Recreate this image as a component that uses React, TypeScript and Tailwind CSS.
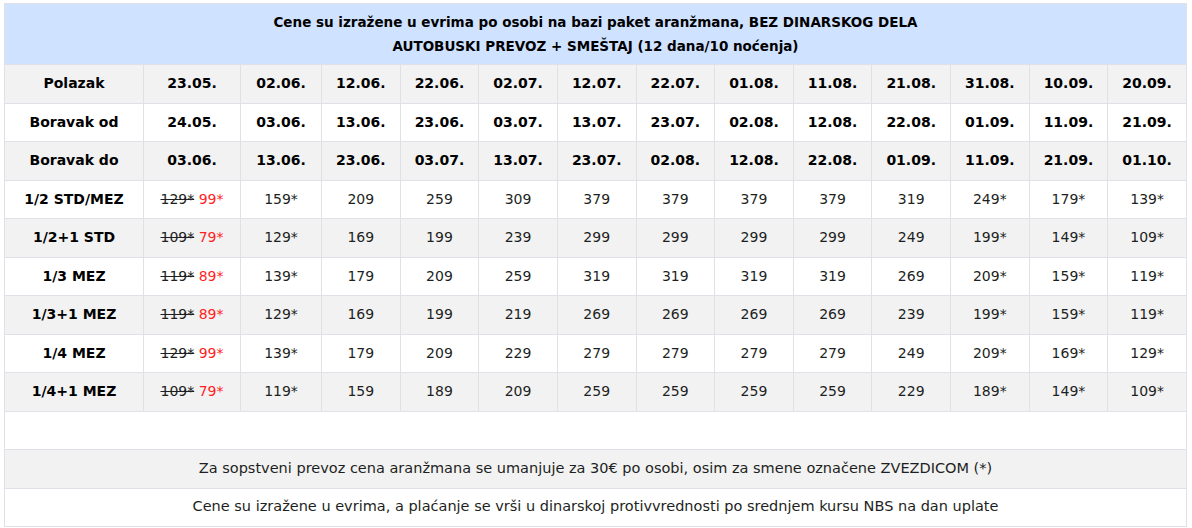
const dates = {
  polazak: ['23.05.', '02.06.', '12.06.', '22.06.', '02.07.', '12.07.', '22.07.', '01.08.', '11.08.', '21.08.', '31.08.', '10.09.', '20.09.'],
  od: ['24.05.', '03.06.', '13.06.', '23.06.', '03.07.', '13.07.', '23.07.', '02.08.', '12.08.', '22.08.', '01.09.', '11.09.', '21.09.'],
  do: ['03.06.', '13.06.', '23.06.', '03.07.', '13.07.', '23.07.', '02.08.', '12.08.', '22.08.', '01.09.', '11.09.', '21.09.', '01.10.'],
};

// first cell: [old, new], rest plain strings
const prices: { label: string; first: [string, string]; rest: string[] }[] = [
  { label: '1/2 STD/MEZ', first: ['129*', '99*'], rest: ['159*', '209', '259', '309', '379', '379', '379', '379', '319', '249*', '179*', '139*'] },
  { label: '1/2+1 STD', first: ['109*', '79*'], rest: ['129*', '169', '199', '239', '299', '299', '299', '299', '249', '199*', '149*', '109*'] },
  { label: '1/3 MEZ', first: ['119*', '89*'], rest: ['139*', '179', '209', '259', '319', '319', '319', '319', '269', '209*', '159*', '119*'] },
  { label: '1/3+1 MEZ', first: ['119*', '89*'], rest: ['129*', '169', '199', '219', '269', '269', '269', '269', '239', '199*', '159*', '119*'] },
  { label: '1/4 MEZ', first: ['129*', '99*'], rest: ['139*', '179', '209', '229', '279', '279', '279', '279', '249', '209*', '169*', '129*'] },
  { label: '1/4+1 MEZ', first: ['109*', '79*'], rest: ['119*', '159', '189', '209', '259', '259', '259', '259', '229', '189*', '149*', '109*'] },
];

const cell = 'border border-[#dee2e6] text-center align-middle px-1';

export default function App() {
  return (
    <div className="bg-white w-[1192px] h-[528px] pt-[3px] pl-[4px] font-['DejaVu_Sans',sans-serif] text-[14px] text-[#1d1f22]">
      <table className="table-fixed border-collapse w-[1183px]">
        <colgroup>
          <col className="w-[139px]" />
          <col className="w-[97px]" />
          <col className="w-[81px]" />
        </colgroup>
        <tbody>
          <tr className="bg-[#cfe2ff] h-[61px]">
            <td colSpan={14} className={`${cell} font-bold text-black text-[13.5px] leading-6`}>
              Cene su izražene u evrima po osobi na bazi paket aranžmana, BEZ DINARSKOG DELA
              <br />
              AUTOBUSKI PREVOZ + SMEŠTAJ (12 dana/10 noćenja)
            </td>
          </tr>
          {[
            ['Polazak', dates.polazak, 'bg-[#f2f2f2]'],
            ['Boravak od', dates.od, 'bg-white'],
            ['Boravak do', dates.do, 'bg-[#f2f2f2]'],
          ].map(([label, list, bg]) => (
            <tr key={label as string} className={`${bg} h-[38.5px] font-bold text-black`}>
              <td className={cell}>{label as string}</td>
              {(list as string[]).map((d, i) => (
                <td key={i} className={cell}>{d}</td>
              ))}
            </tr>
          ))}
          {prices.map((row, r) => (
            <tr key={row.label} className={`${r % 2 === 0 ? 'bg-white' : 'bg-[#f2f2f2]'} h-[38.5px]`}>
              <td className={`${cell} font-bold text-black`}>{row.label}</td>
              <td className={cell}>
                <span className="line-through">{row.first[0]}</span>{' '}
                <span className="text-[#ff1f1f]">{row.first[1]}</span>
              </td>
              {row.rest.map((p, i) => (
                <td key={i} className={cell}>{p}</td>
              ))}
            </tr>
          ))}
          <tr className="bg-white h-[38.5px]">
            <td colSpan={14} className={cell}></td>
          </tr>
          <tr className="bg-[#f2f2f2] h-[38.5px]">
            <td colSpan={14} className={`${cell} text-[14.5px]`}>
              Za sopstveni prevoz cena aranžmana se umanjuje za 30€ po osobi, osim za smene označene ZVEZDICOM (*)
            </td>
          </tr>
          <tr className="bg-white h-[38.5px]">
            <td colSpan={14} className={`${cell} text-[14.5px]`}>
              Cene su izražene u evrima, a plaćanje se vrši u dinarskoj protivvrednosti po srednjem kursu NBS na dan uplate
            </td>
          </tr>
        </tbody>
      </table>
    </div>
  );
}
